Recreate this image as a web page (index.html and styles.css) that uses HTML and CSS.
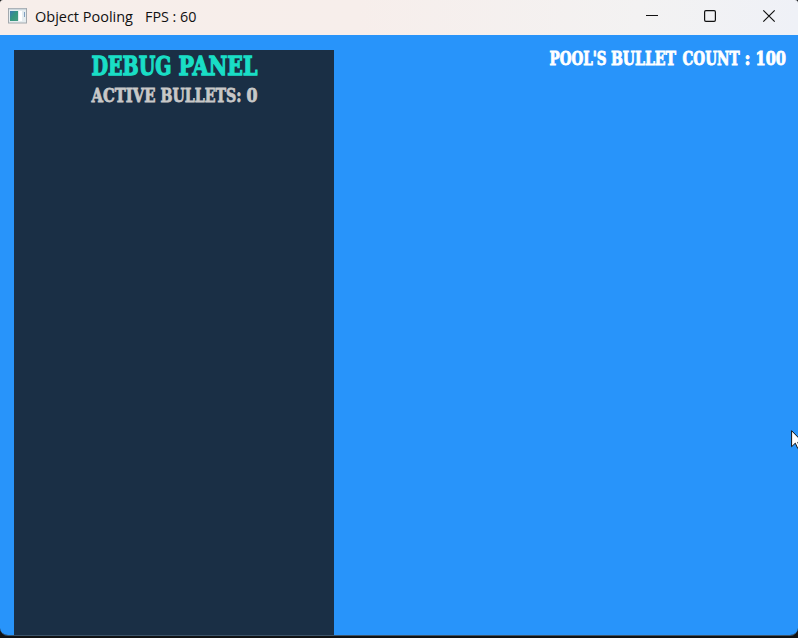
FILE: index.html
```html
<!DOCTYPE html>
<html lang="en">
<head>
<meta charset="utf-8">
<title>Object Pooling</title>
<link rel="stylesheet" href="styles.css">
</head>
<body>
<div class="window">
  <header class="titlebar">
    <svg class="app-icon" width="19" height="16" viewBox="0 0 19 16">
      <defs><linearGradient id="g" x2="1" y2="1"><stop stop-color="#3c78b4"/><stop offset=".5" stop-color="#35977f"/><stop offset="1" stop-color="#489b83"/></linearGradient></defs>
      <rect x=".5" y=".5" width="18" height="14.5" fill="#e6edf0" stroke="#a3a9ae"/>
      <path d="M1 1.2h17" stroke="#c3ccd3"/>
      <rect x="2" y="3" width="8" height="10" fill="url(#g)"/>
      <rect x="11" y="3" width="3" height="10" fill="#fff"/>
      <path d="M16.5 4v5" stroke="#7f9fc0"/><path d="M15 3v4" stroke="#dce8ee"/>
    </svg>
    <svg class="title" width="170" height="34"><text x="0" y="22" textLength="98" lengthAdjust="spacingAndGlyphs">Object Pooling</text><text x="110" y="22" textLength="51.5" lengthAdjust="spacingAndGlyphs">FPS : 60</text></svg>
    <svg class="controls" width="168" height="35" fill="none" stroke="#111" stroke-width="1.2">
      <path d="M16 15.5h12" stroke-width="1"/>
      <rect x="74.6" y="10.6" width="10.8" height="10.8" rx="1.3"/>
      <path d="M133.3 10.3l11.4 11.4M144.7 10.3l-11.4 11.4"/>
    </svg>
  </header>
  <main class="stage">
    <section class="panel">
      <svg class="stats" width="172" height="60">
        <text class="heading" y="24.5"><tspan x="0.5" textLength="80" lengthAdjust="spacingAndGlyphs">DEBUG</tspan> <tspan x="87.5" textLength="79" lengthAdjust="spacingAndGlyphs">PANEL</tspan></text>
        <text class="label" y="51.7"><tspan x="0.5" textLength="64" lengthAdjust="spacingAndGlyphs">ACTIVE</tspan> <tspan x="69.5" textLength="81" lengthAdjust="spacingAndGlyphs">BULLETS:</tspan> <tspan x="155.5" textLength="11" lengthAdjust="spacingAndGlyphs">0</tspan></text>
      </svg>
    </section>
    <svg class="count" width="244" height="34">
      <text y="25"><tspan x="4.5" textLength="57" lengthAdjust="spacingAndGlyphs">POOL'S</tspan> <tspan x="66" textLength="65" lengthAdjust="spacingAndGlyphs">BULLET</tspan> <tspan x="137.5" textLength="57" lengthAdjust="spacingAndGlyphs">COUNT</tspan> <tspan x="199.5" textLength="6" lengthAdjust="spacingAndGlyphs">:</tspan> <tspan x="210.5" textLength="30.5" lengthAdjust="spacingAndGlyphs">100</tspan></text>
    </svg>
  </main>
</div>
<svg class="cursor" width="13" height="20" viewBox="0 0 13 20"><path d="M.6.7v16l3.7-3.5 2.5 5.3 2.3-1-2.4-5.2h5.2z" fill="#fff" stroke="#111"/></svg>
</body>
</html>
```
FILE: styles.css
```css
* { box-sizing: border-box; }
body { margin: 0; height: 638px; overflow: hidden; background: #101214; }
svg { display: block; flex: none; overflow: visible; }
.window {
  display: flex;
  flex-direction: column;
  height: 636px;
  overflow: hidden;
  border-radius: 3px 3px 8px 8px;
  border-bottom: 1px solid #3c5368;
}
.titlebar {
  display: flex;
  height: 35px;
  flex: none;
  padding-left: 8px;
  background: linear-gradient(90deg, #f7eeea, #f7eeeb 45%, #f3f2f2 80%, #eff1f7);
}
.app-icon { margin-top: 8px; }
.title { margin-left: 8px; font: 15px "Open Sans", "Noto Sans", sans-serif; fill: #111; }
.controls { margin-left: auto; }
.stage {
  display: flex;
  justify-content: space-between;
  align-items: flex-start;
  flex: 1;
  padding: 0 9px 0 14px;
  background: #2894fa;
}
.panel { align-self: stretch; width: 320px; margin-top: 15px; background: #1a2f45; }
.stats { margin-left: 77px; }
.count { margin-top: 5px; }
.stats, .count { font-family: "DejaVu Serif", serif; font-weight: bold; }
.heading { font-size: 26px; fill: #19dec6; stroke: #19dec6; stroke-width: 1.3px; }
.label { font-size: 18px; fill: #c8c8c8; stroke: #c8c8c8; stroke-width: .8px; }
.count { font-size: 18px; fill: #fff; }
.count text { stroke: #fff; stroke-width: .9px; }
.cursor { position: absolute; left: 791px; top: 430px; }
```
